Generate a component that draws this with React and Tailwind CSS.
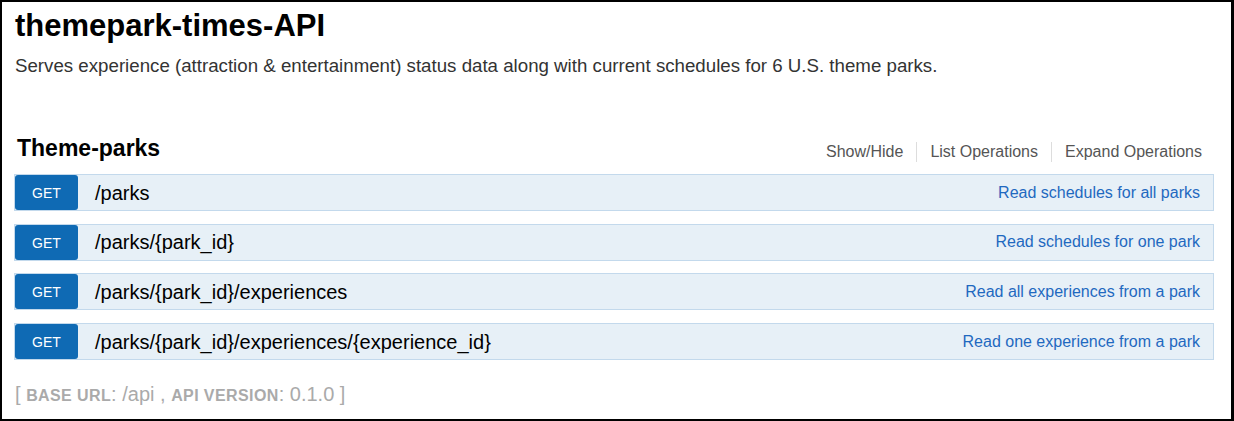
import React from "react";

const ops = [
  { path: "/parks", summary: "Read schedules for all parks" },
  { path: "/parks/{park_id}", summary: "Read schedules for one park" },
  { path: "/parks/{park_id}/experiences", summary: "Read all experiences from a park" },
  { path: "/parks/{park_id}/experiences/{experience_id}", summary: "Read one experience from a park" },
];

function OpRow({ path, summary }) {
  return (
    <div className="flex items-center h-[37px] bg-[#e7f0f7] border border-[#c3d9ec]">
      <span className="flex items-center justify-center w-[63px] h-[35px] pt-[2px] bg-[#0f6ab4] rounded-[3px] text-white text-[14px]">
        GET
      </span>
      <span className="ml-[17px] text-[20px] text-black">{path}</span>
      <span className="ml-auto mr-[13px] text-[16px] text-[#1f69c0]">{summary}</span>
    </div>
  );
}

export default function App() {
  return (
    <div
      className="h-[421px] w-[1234px] border-2 border-r-[3px] border-black bg-white overflow-hidden"
      style={{ fontFamily: '"Liberation Sans", Arial, sans-serif' }}
    >
      <div className="pl-[13px] pr-[17px] pt-[5px]">
        <h1 className="text-[31px] font-bold leading-[37px] text-black">themepark-times-API</h1>
        <p className="mt-[11px] text-[18.7px] leading-[22px] text-[#333]">
          Serves experience (attraction &amp; entertainment) status data along with current schedules for 6 U.S. theme parks.
        </p>

        <div className="mt-[57px] flex items-end justify-between pl-[2px] pb-[12px]">
          <h2 className="text-[23px] font-bold leading-[28px] text-black">Theme-parks</h2>
          <div className="flex items-center text-[16px] leading-[20px] text-[#555] mr-[12px]">
            <span className="pr-[13px]">Show/Hide</span>
            <span className="border-l border-[#ddd] px-[13px]">List Operations</span>
            <span className="border-l border-[#ddd] pl-[13px]">Expand Operations</span>
          </div>
        </div>

        <div className="flex flex-col gap-[12.7px] -ml-px">
          {ops.map((op) => (
            <OpRow key={op.path} {...op} />
          ))}
        </div>

        <div className="mt-[22px] text-[20px] leading-[24px] text-[#aaa]">
          [ <span className="text-[16px] font-bold tracking-wide">BASE URL</span>: /api ,{" "}
          <span className="text-[16px] font-bold tracking-wide">API VERSION</span>: 0.1.0 ]
        </div>
      </div>
    </div>
  );
}
